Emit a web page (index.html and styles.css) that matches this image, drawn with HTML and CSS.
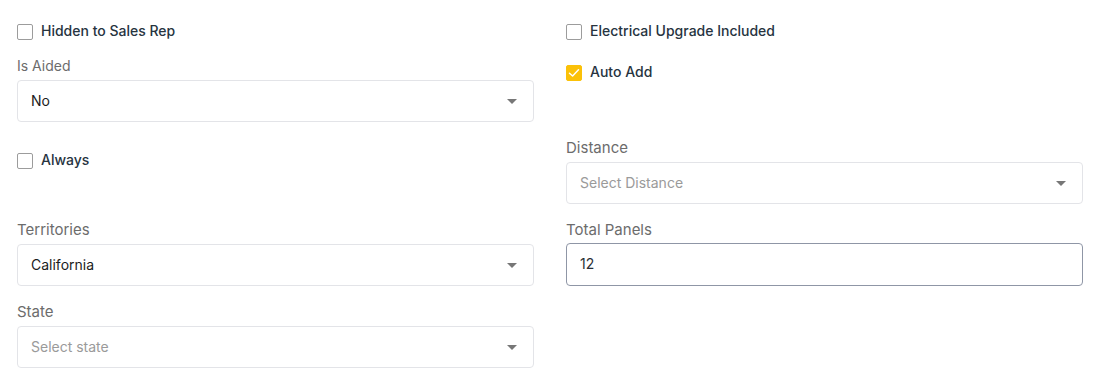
FILE: index.html
```html
<!DOCTYPE html>
<html>
<head>
<meta charset="utf-8">
<link rel="stylesheet" href="styles.css">
</head>
<body>
<div class="form">
  <div class="col">
    <label class="check row-hidden"><span class="box"></span><span class="check-text">Hidden to Sales Rep</span></label>
    <div class="field f-aided">
      <div class="label label-sm">Is Aided</div>
      <div class="select"><span class="value">No</span><span class="caret"></span></div>
    </div>
    <label class="check row-always"><span class="box"></span><span class="check-text">Always</span></label>
    <div class="field f-territories">
      <div class="label">Territories</div>
      <div class="select"><span class="value">California</span><span class="caret"></span></div>
    </div>
    <div class="field f-state">
      <div class="label">State</div>
      <div class="select"><span class="placeholder">Select state</span><span class="caret"></span></div>
    </div>
  </div>
  <div class="col">
    <label class="check row-hidden"><span class="box"></span><span class="check-text">Electrical Upgrade Included</span></label>
    <label class="check row-auto"><span class="box checked"><svg width="12" height="10" viewBox="0 0 12 10"><path d="M1.5 5.2 L4.6 8 L10.5 1.8" fill="none" stroke="#fff" stroke-width="1.5" stroke-linecap="round" stroke-linejoin="round"/></svg></span><span class="check-text">Auto Add</span></label>
    <div class="field f-distance">
      <div class="label">Distance</div>
      <div class="select"><span class="placeholder">Select Distance</span><span class="caret"></span></div>
    </div>
    <div class="field f-panels">
      <div class="label label-panels">Total Panels</div>
      <div class="input"><span class="value value-input">12</span></div>
    </div>
  </div>
</div>
</body>
</html>
```
FILE: styles.css
```css
* { box-sizing: border-box; }
html, body { margin: 0; padding: 0; background: #fff; }
body { font-family: Inter, "Noto Sans", "Liberation Sans", sans-serif; }

.form {
  display: flex;
  gap: 32px;
  padding: 22px 0 0 17px;
}
.col {
  width: 517px;
  display: flex;
  flex-direction: column;
}

.check {
  display: flex;
  align-items: center;
  height: 20px;
  line-height: 20px;
}
.box {
  width: 16px;
  height: 16px;
  border: 1px solid #9c9c9c;
  border-radius: 2px;
  background: #fff;
  margin-right: 8px;
  display: flex;
  align-items: center;
  justify-content: center;
  flex: none;
}
.box.checked {
  background: #fbc108;
  border-color: #fbc108;
}
.check-text {
  font-size: 14px;
  font-weight: 500;
  color: #27343f;
  margin-top: -2px;
}

.row-always { margin-top: 29px; }
.row-auto { margin-top: 21px; }

.label {
  font-size: 15px;
  line-height: 22px;
  color: #6c6c6c;
  margin-bottom: 3px;
}
.label-sm { font-size: 14px; line-height: 20px; margin-bottom: 4px; }
.label-panels { margin-bottom: 2px; }

.f-aided { margin-top: 14px; }
.f-territories { margin-top: 48px; }
.f-state { margin-top: 15px; }
.f-distance { margin-top: 54px; }
.f-panels { margin-top: 15px; }

.select, .input {
  height: 42px;
  border: 1px solid #e3e4e8;
  border-radius: 4px;
  display: flex;
  align-items: center;
  justify-content: space-between;
  padding: 0 16px 0 13px;
  font-size: 14px;
}
.input {
  height: 43px;
  border-color: #8f96a6;
}
.value, .placeholder { margin-top: -2px; }
.value { color: #1c1c1c; }
.value-input { color: #2a2f36; }
.placeholder { color: #9a9a9a; }
.caret {
  width: 0;
  height: 0;
  border-left: 5px solid transparent;
  border-right: 5px solid transparent;
  border-top: 5px solid #777;
}
```
